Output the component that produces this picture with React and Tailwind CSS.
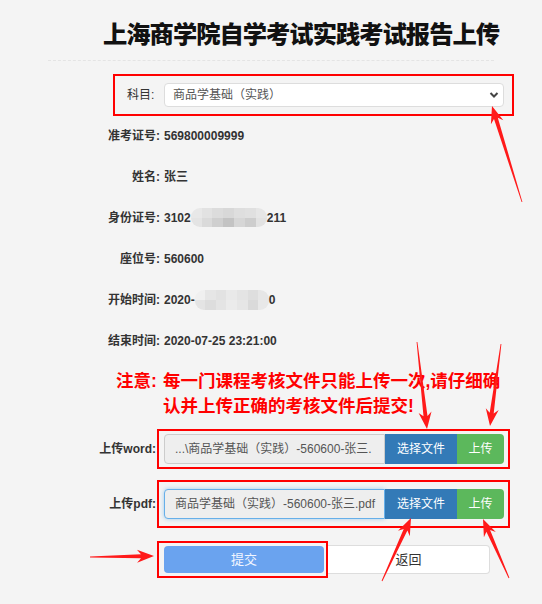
const font = { fontFamily: '"Liberation Sans", "Noto Sans CJK SC", sans-serif' };

// annotation arrows: [tailX, tailY, tipX, tipY]
const arrows = [
  [522, 202, 492, 106],
  [417, 342, 427, 429],
  [501, 344, 490, 426],
  [382, 581, 411, 518],
  [509, 578, 483, 519],
  [90, 557, 154, 556],
];

function arrowPoints([x1, y1, x2, y2]) {
  const dx = x2 - x1;
  const dy = y2 - y1;
  const len = Math.hypot(dx, dy);
  const ux = dx / len;
  const uy = dy / len;
  const nx = -uy;
  const ny = ux;
  const head = 17;
  const barb = 6.5;
  const shaft = 2;
  const bx = x2 - ux * head;
  const by = y2 - uy * head;
  const jx = x2 - ux * (head - 4);
  const jy = y2 - uy * (head - 4);
  const pts = [
    [x1 + nx * 0.4, y1 + ny * 0.4],
    [jx + nx * shaft, jy + ny * shaft],
    [bx + nx * barb, by + ny * barb],
    [x2, y2],
    [bx - nx * barb, by - ny * barb],
    [jx - nx * shaft, jy - ny * shaft],
    [x1 - nx * 0.4, y1 - ny * 0.4],
  ];
  return pts.map((p) => p.map((v) => v.toFixed(1)).join(",")).join(" ");
}

function Mosaic({ cells, className }) {
  return (
    <span className={"inline-grid grid-cols-7 grid-rows-2 overflow-hidden " + className}>
      {cells.map((c, i) => (
        <span key={i} className={c} />
      ))}
    </span>
  );
}

const idCells = [
  "bg-[#e8e8e8]", "bg-[#e2e2e2]", "bg-[#dcdcdc]", "bg-[#d8d8d8]", "bg-[#dedede]", "bg-[#e0e0e0]", "bg-[#e6e6e6]",
  "bg-[#e4e4e4]", "bg-[#dadada]", "bg-[#cfcfcf]", "bg-[#c3c3c3]", "bg-[#d6d6d6]", "bg-[#cdcdcd]", "bg-[#e2e2e2]",
];
const timeCells = [
  "bg-[#f0f0f0]", "bg-[#e6e6e6]", "bg-[#e2e2e2]", "bg-[#e9e9e9]", "bg-[#e4e4e4]", "bg-[#dedede]", "bg-[#e6e6e6]",
  "bg-[#e4e4e4]", "bg-[#dddddd]", "bg-[#e4e4e4]", "bg-[#ebebeb]", "bg-[#e6e6e6]", "bg-[#dadada]", "bg-[#e8e8e8]",
];

function InfoRow({ label, children }) {
  return (
    <div className="flex h-[41px] items-center text-[12px] font-bold text-[#333]">
      <span className="w-[160px] text-right">{label}</span>
      <span className="ml-[4px] flex items-center">{children}</span>
    </div>
  );
}

function UploadRow({ label, file, focused, boxH }) {
  return (
    <div className="flex items-center">
      <span className="w-[157px] pr-[1px] text-right text-[12px] font-bold text-[#333]">{label}</span>
      <div className={"flex w-[353px] items-center border-2 border-[#ff0000] pl-[5px] " + boxH}>
        <div className="flex h-[30px] w-[340px]">
          <div
            className={
              "flex w-[221px] items-center overflow-hidden whitespace-nowrap rounded-l-[4px] border bg-[#eeeeee] pl-[10px] text-[12px] text-[#555] " +
              (focused ? "border-[#66afe9] shadow-[0_0_4px_rgba(102,175,233,0.6)]" : "border-[#cccccc]")
            }
          >
            {file}
          </div>
          <button className="w-[72px] bg-[#337ab7] text-[12px] text-white">选择文件</button>
          <button className="w-[47px] rounded-r-[4px] bg-[#5cb85c] text-[12px] text-white">上传</button>
        </div>
      </div>
    </div>
  );
}

export default function App() {
  return (
    <div className="relative h-[604px] w-[542px] overflow-hidden bg-[#f4f4f4]" style={font}>
      <h1 className="pl-[103px] pt-[18px] text-[24.3px] font-black leading-[33px] tracking-[-1px] text-[#111]">
        上海商学院自学考试实践考试报告上传
      </h1>
      <div className="mx-[48px] mt-[9px] border-t border-dashed border-[#e4e4e4]" />

      <div className="ml-[113px] mt-[13px] flex h-[42px] w-[401px] items-center border-2 border-[#ff0000] pl-[12px]">
        <span className="w-[37px] text-[12px] text-[#333]">科目:</span>
        <div className="flex h-[24px] w-[340px] items-center justify-between rounded-[4px] border border-[#dddddd] bg-white pl-[8px] pr-[4px] text-[12px] text-[#555]">
          <span>商品学基础（实践）</span>
          <svg width="10" height="8" viewBox="0 0 10 8">
            <path d="M1.5 2 L5 5.5 L8.5 2" fill="none" stroke="#444" strokeWidth="2" />
          </svg>
        </div>
      </div>

      <div className="-mt-[1px]">
        <InfoRow label="准考证号:">569800009999</InfoRow>
        <InfoRow label="姓名:">张三</InfoRow>
        <InfoRow label="身份证号:">
          3102
          <Mosaic cells={idCells} className="h-[19px] w-[76px] rounded-[9px]" />
          211
        </InfoRow>
        <InfoRow label="座位号:">560600</InfoRow>
        <InfoRow label="开始时间:">
          2020-
          <Mosaic cells={timeCells} className="h-[20px] w-[74px] rounded-[9px]" />
          0
        </InfoRow>
        <InfoRow label="结束时间:">2020-07-25 23:21:00</InfoRow>
      </div>

      <div className="ml-[116px] mt-[8px] flex text-[17.5px] font-bold leading-[25px] text-[#ff0000]">
        <span className="w-[47px] shrink-0">注意:</span>
        <span>
          每一门课程考核文件只能上传一次,请仔细确
          <br />
          认并上传正确的考核文件后提交!
        </span>
      </div>

      <div className="mt-[10px]">
        <UploadRow label="上传word:" file="...\商品学基础（实践）-560600-张三." boxH="h-[40px]" />
      </div>
      <div className="mt-[11px]">
        <UploadRow label="上传pdf:" file="商品学基础（实践）-560600-张三.pdf" focused boxH="h-[48px]" />
      </div>

      <div className="ml-[157px] mt-[13px] flex items-center">
        <div className="flex h-[37px] w-[171px] items-center border-2 border-[#ff0000] pl-[5px]">
          <button className="h-[27px] w-[160px] rounded-[4px] bg-[#6aa3ef] text-[13px] text-[#f2f6ff]">提交</button>
        </div>
        <button className="h-[29px] w-[162px] rounded-r-[4px] border border-l-0 border-[#dddddd] bg-white text-[13px] text-[#333]">
          返回
        </button>
      </div>

      <svg className="pointer-events-none absolute left-0 top-0" width="542" height="604">
        {arrows.map((a, i) => (
          <polygon key={i} points={arrowPoints(a)} fill="#ff1a1a" />
        ))}
      </svg>
    </div>
  );
}
